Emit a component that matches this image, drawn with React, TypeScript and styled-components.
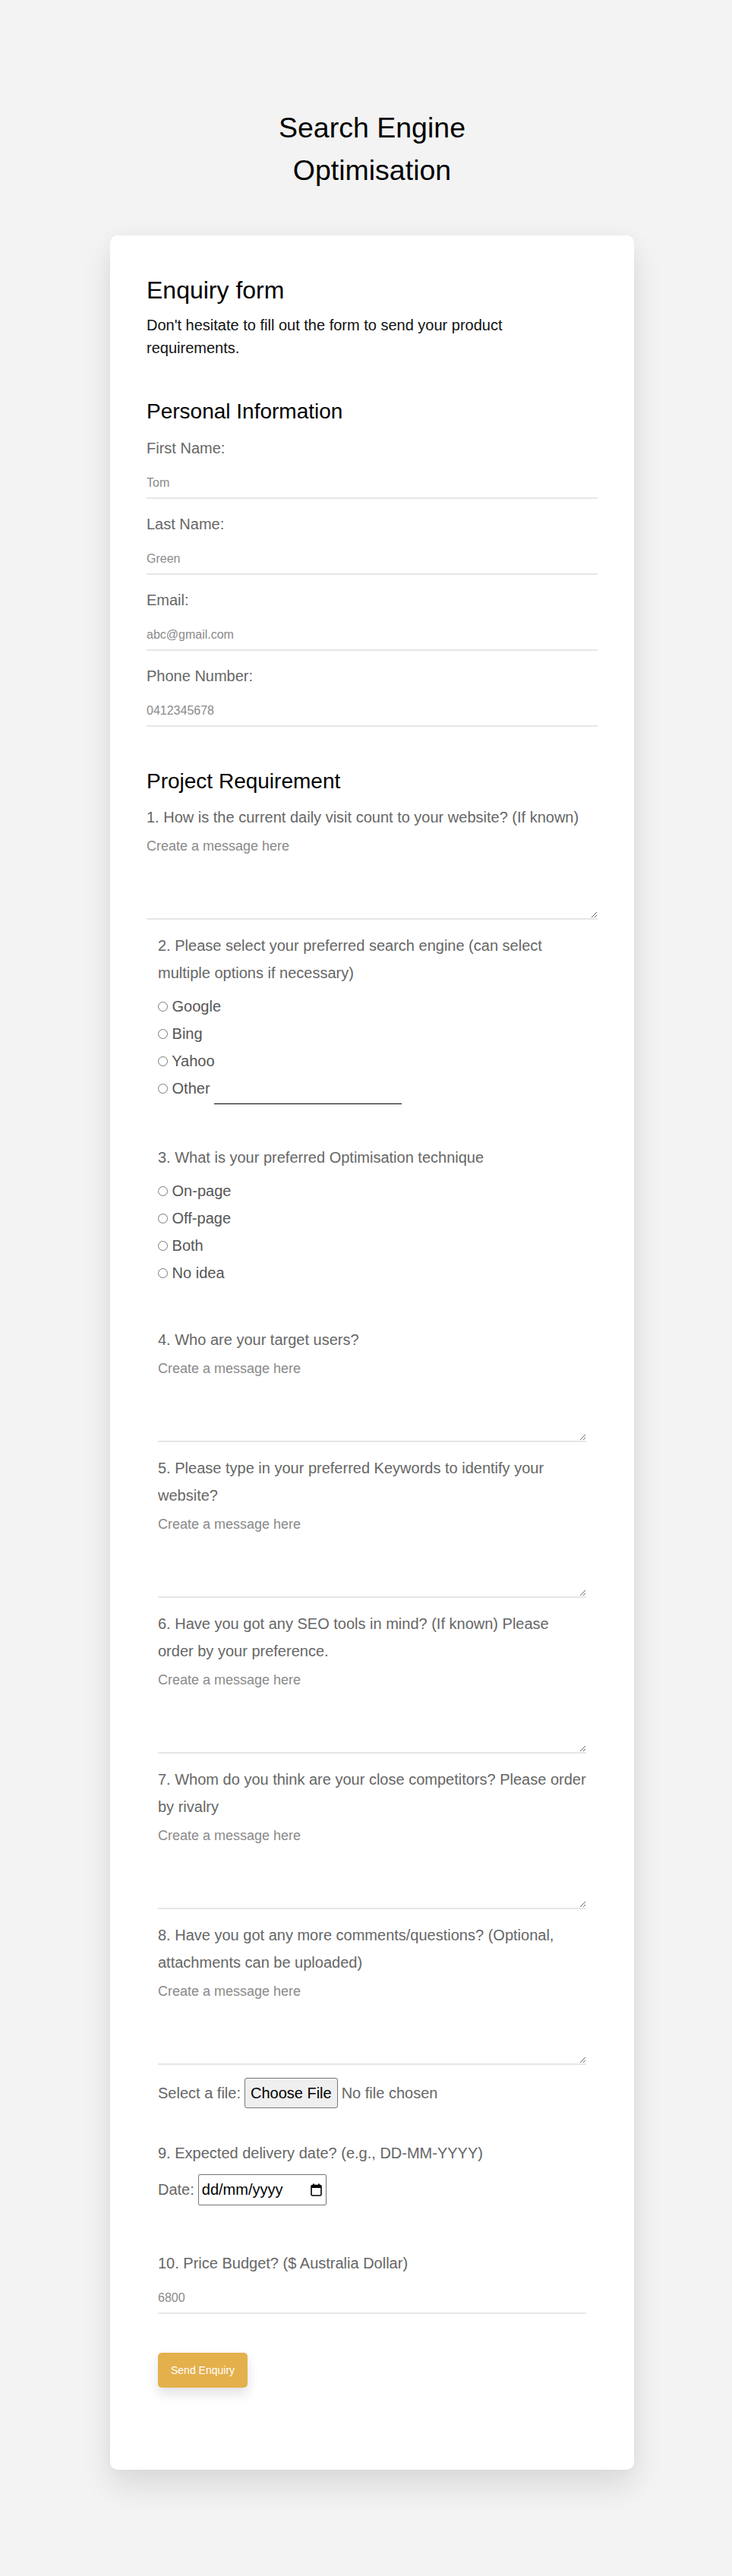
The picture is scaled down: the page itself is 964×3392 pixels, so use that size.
import React from 'react';
import styled, { createGlobalStyle } from 'styled-components';

const GlobalStyle = createGlobalStyle`
  body {
    margin: 0;
    background: #f3f3f3;
    font-family: "Liberation Sans", Arial, sans-serif;
  }
`;

const searchEngines = ['Google', 'Bing', 'Yahoo'];
const techniques = ['On-page', 'Off-page', 'Both', 'No idea'];

const personalFields = [
  { label: 'First Name:', placeholder: 'Tom', type: 'text' },
  { label: 'Last Name:', placeholder: 'Green', type: 'text' },
  { label: 'Email:', placeholder: 'abc@gmail.com', type: 'email' },
  { label: 'Phone Number:', placeholder: '0412345678', type: 'tel' },
];

const messageQuestions = [
  { id: 'q4', lines: ['4. Who are your target users?'], gap: 52 },
  {
    id: 'q5',
    lines: ['5. Please type in your preferred Keywords to identify your', 'website?'],
  },
  {
    id: 'q6',
    lines: ['6. Have you got any SEO tools in mind? (If known) Please', 'order by your preference.'],
  },
  {
    id: 'q7',
    lines: ['7. Whom do you think are your close competitors? Please order', 'by rivalry'],
  },
  {
    id: 'q8',
    lines: ['8. Have you got any more comments/questions? (Optional,', 'attachments can be uploaded)'],
  },
];

const Lines = ({ lines }: { lines: string[] }) => (
  <>
    {lines.map((line, i) => (
      <React.Fragment key={line}>
        {i > 0 && <br />}
        {line}
      </React.Fragment>
    ))}
  </>
);

const CalendarIcon = () => (
  <svg width="15" height="17" viewBox="0 0 15 17" aria-hidden="true">
    <rect x="1" y="2.5" width="13" height="13.5" rx="1.5" fill="none" stroke="#000" strokeWidth="1.6" />
    <rect x="1" y="2.5" width="13" height="3.5" fill="#000" />
    <rect x="3.2" y="0.5" width="1.8" height="3" fill="#000" />
    <rect x="10" y="0.5" width="1.8" height="3" fill="#000" />
  </svg>
);

export default function App() {
  return (
    <>
      <GlobalStyle />
      <Page>
        <Title>Search Engine Optimisation</Title>
        <Card>
          <FormTitle>Enquiry form</FormTitle>
          <Intro>
            <Lines lines={["Don't hesitate to fill out the form to send your product", 'requirements.']} />
          </Intro>

          <SectionTitle $top={52}>Personal Information</SectionTitle>
          {personalFields.map((f) => (
            <Field key={f.label}>
              <Label>{f.label}</Label>
              <TextInput type={f.type} placeholder={f.placeholder} />
            </Field>
          ))}

          <SectionTitle $top={55}>Project Requirement</SectionTitle>
          <Field>
            <Label>1. How is the current daily visit count to your website? (If known)</Label>
            <MessageArea placeholder="Create a message here" />
          </Field>

          <Indented>
            <Block>
              <Label $nowrap>
                <Lines
                  lines={[
                    '2. Please select your preferred search engine (can select',
                    'multiple options if necessary)',
                  ]}
                />
              </Label>
              <RadioGroup>
                {searchEngines.map((name) => (
                  <RadioRow key={name}>
                    <Radio type="radio" name="engine" /> {name}
                  </RadioRow>
                ))}
                <RadioRow>
                  <Radio type="radio" name="engine" /> Other <OtherInput type="text" />
                </RadioRow>
              </RadioGroup>
            </Block>

            <Block>
              <Label>3. What is your preferred Optimisation technique</Label>
              <RadioGroup>
                {techniques.map((name) => (
                  <RadioRow key={name}>
                    <Radio type="radio" name="technique" /> {name}
                  </RadioRow>
                ))}
              </RadioGroup>
            </Block>

            {messageQuestions.map((q) => (
              <Block key={q.id}>
                <Label $nowrap>
                  <Lines lines={q.lines} />
                </Label>
                <MessageArea placeholder="Create a message here" />
              </Block>
            ))}

            <FileRow>
              <span>Select a file:</span>
              <FileButton>
                Choose File
                <input type="file" hidden />
              </FileButton>
              <span>No file chosen</span>
            </FileRow>

            <Block $gap={41}>
              <Label>9. Expected delivery date? (e.g., DD-MM-YYYY)</Label>
              <DateRow>
                <span>Date:</span>
                <DateBox>
                  dd/mm/yyyy
                  <CalendarIcon />
                </DateBox>
              </DateRow>
            </Block>

            <Block $gap={58}>
              <Label>10. Price Budget? ($ Australia Dollar)</Label>
              <TextInput type="text" placeholder="6800" />
            </Block>

            <SubmitButton type="button">Send Enquiry</SubmitButton>
          </Indented>
        </Card>
      </Page>
    </>
  );
}

const Page = styled.main`
  min-height: 100vh;
  box-sizing: border-box;
  padding: 140px 0 140px 16px;
`;

const Title = styled.h1`
  width: 300px;
  margin: 0 auto;
  text-align: center;
  font-size: 37.5px;
  line-height: 56.25px;
  font-weight: 400;
  color: #000;
`;

const Card = styled.section`
  width: 690px;
  box-sizing: border-box;
  margin: 57px auto 0;
  padding: 53px 48px 108px;
  background: #fff;
  border-radius: 10px;
  box-shadow: 0 22px 40px rgba(0, 0, 0, 0.1), 0 0 24px rgba(0, 0, 0, 0.03);
`;

const FormTitle = styled.h2`
  margin: 0;
  font-size: 32px;
  line-height: 38.4px;
  font-weight: 400;
  color: #000;
`;

const Intro = styled.p`
  margin: 12px 0 0;
  font-size: 20px;
  line-height: 30px;
  color: #111;
  white-space: nowrap;
`;

const SectionTitle = styled.h3<{ $top: number }>`
  margin: ${({ $top }) => $top}px 0 13px;
  font-size: 28px;
  line-height: 33.6px;
  font-weight: 400;
  color: #000;
`;

const Field = styled.div`
  & + & {
    margin-top: 15px;
  }
`;

const Label = styled.label<{ $nowrap?: boolean }>`
  display: block;
  font-size: 20px;
  line-height: 36px;
  color: #666;
  white-space: ${({ $nowrap }) => ($nowrap ? 'nowrap' : 'normal')};
`;

const TextInput = styled.input`
  display: block;
  width: 100%;
  height: 40px;
  box-sizing: border-box;
  margin: 9px 0 0;
  padding: 0;
  border: 0;
  border-bottom: 2px solid #e6e6e6;
  background: transparent;
  font-family: inherit;
  font-size: 16px;
  color: #333;
  outline: none;

  &::placeholder {
    color: #8a8a8a;
  }
`;

const MessageArea = styled.textarea`
  display: block;
  width: 100%;
  height: 107px;
  box-sizing: border-box;
  margin: 10px 0 0;
  padding: 0;
  border: 0;
  border-bottom: 2px solid #e6e6e6;
  background: transparent;
  font-family: inherit;
  font-size: 18px;
  color: #333;
  outline: none;
  resize: vertical;

  &::placeholder {
    color: #8a8a8a;
  }
`;

const Indented = styled.div`
  padding: 0 15px;
`;

const Block = styled.div<{ $gap?: number }>`
  margin-top: ${({ $gap }) => $gap ?? 16}px;
`;

const RadioGroup = styled.div`
  margin-top: 8px;
  padding-bottom: 36px;
`;

const RadioRow = styled.label`
  display: block;
  font-size: 20px;
  line-height: 36px;
  color: #555;
`;

const Radio = styled.input`
  margin: 0;
`;

const OtherInput = styled.input`
  width: 247px;
  box-sizing: border-box;
  padding: 0 0 8px;
  border: 0;
  border-bottom: 1px solid #000;
  background: transparent;
  font-family: inherit;
  font-size: 20px;
  outline: none;
`;

const FileRow = styled.div`
  display: flex;
  align-items: center;
  gap: 5px;
  margin-top: 17px;
  font-size: 20px;
  color: #666;
`;

const FileButton = styled.label`
  display: inline-flex;
  align-items: center;
  height: 40px;
  box-sizing: border-box;
  padding: 0 7px;
  border: 1px solid #767676;
  border-radius: 3px;
  background: #efefef;
  color: #000;
  cursor: pointer;
`;

const DateRow = styled.div`
  display: flex;
  align-items: center;
  gap: 5px;
  margin-top: 10px;
  font-size: 20px;
  color: #666;
`;

const DateBox = styled.div`
  display: flex;
  align-items: center;
  justify-content: space-between;
  width: 169px;
  height: 41px;
  box-sizing: border-box;
  padding: 0 5px 0 4px;
  border: 1px solid #767676;
  border-radius: 2px;
  color: #000;
`;

const SubmitButton = styled.button`
  display: block;
  margin-top: 51px;
  padding: 15px 17px;
  border: 0;
  border-radius: 5px;
  background: #e4b04c;
  color: #fff;
  font-family: inherit;
  font-size: 14px;
  line-height: 16px;
  box-shadow: 0 8px 16px rgba(0, 0, 0, 0.12);
  cursor: pointer;
`;
